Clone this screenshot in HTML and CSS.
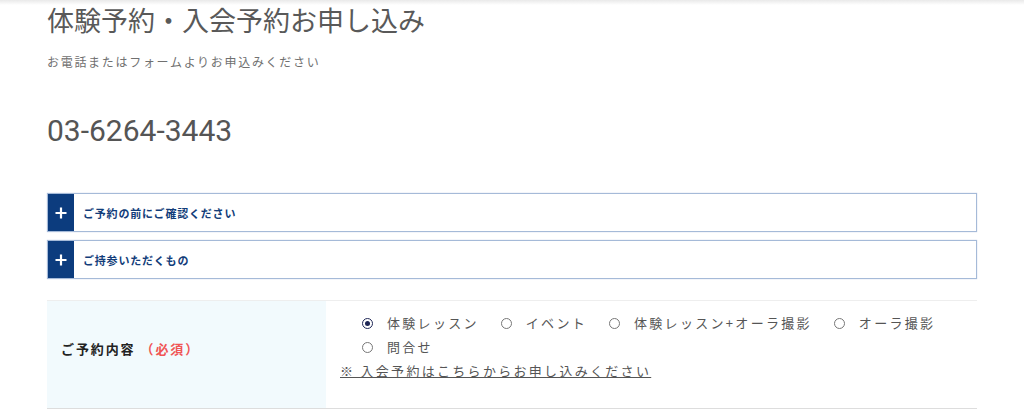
FILE: index.html
```html
<!DOCTYPE html>
<html lang="ja">
<head>
<meta charset="utf-8">
<link rel="stylesheet" href="styles.css">
</head>
<body>
<div class="page">
  <h1 class="title">体験予約・入会予約お申し込み</h1>
  <p class="lead">お電話またはフォームよりお申込みください</p>
  <p class="phone">03-6264-3443</p>

  <div class="acc">
    <span class="acc-icon"><svg width="12" height="12" viewBox="0 0 12 12"><path d="M6 0.5V11.5M0.5 6H11.5" stroke="#fff" stroke-width="2.2"/></svg></span>
    <span class="acc-text">ご予約の前にご確認ください</span>
  </div>
  <div class="acc">
    <span class="acc-icon"><svg width="12" height="12" viewBox="0 0 12 12"><path d="M6 0.5V11.5M0.5 6H11.5" stroke="#fff" stroke-width="2.2"/></svg></span>
    <span class="acc-text">ご持参いただくもの</span>
  </div>

  <div class="form-row">
    <div class="th"><span class="label">ご予約内容</span><span class="req">（必須）</span></div>
    <div class="td">
      <ul class="options">
        <li class="opt"><span class="radio checked"></span>体験レッスン</li>
        <li class="opt"><span class="radio"></span>イベント</li>
        <li class="opt"><span class="radio"></span>体験レッスン+オーラ撮影</li>
        <li class="opt"><span class="radio"></span>オーラ撮影</li>
        <li class="opt"><span class="radio"></span>問合せ</li>
      </ul>
      <a class="note" href="#">※ 入会予約はこちらからお申し込みください</a>
    </div>
  </div>
</div>
</body>
</html>
```

FILE: styles.css
```css
html, body {
  margin: 0;
  padding: 0;
}
body {
  background: linear-gradient(#e9e9e9, #ffffff 5px) no-repeat #fff;
  font-family: "Noto Sans CJK JP", "Noto Sans", sans-serif;
  color: #555;
}
.page {
  margin-left: 47px;
  width: 930px;
}
.title {
  margin: 0;
  font-size: 27px;
  line-height: 40px;
  font-weight: 400;
  color: #595959;
}
.lead {
  margin: 12px 0 0;
  font-size: 12px;
  line-height: 20px;
  letter-spacing: 1.7px;
  color: #707070;
}
.phone {
  margin: 41px 0 0;
  font-family: Roboto, "Noto Sans", sans-serif;
  font-size: 30px;
  line-height: 36px;
  color: #555;
}
.acc {
  display: flex;
  align-items: stretch;
  height: 37px;
  border: 1px solid #a5bad8;
  box-shadow: 0 0 1px rgba(120,150,200,0.5);
  margin-top: 8px;
}
.acc:first-of-type { margin-top: 44px; }
.acc-icon {
  width: 26px;
  background: #0c3c7e;
  display: flex;
  align-items: center;
  justify-content: center;
}
.acc-icon svg { display: block; }
.acc-text {
  display: flex;
  align-items: center;
  margin-left: 9px;
  font-size: 11px;
  font-weight: 700;
  letter-spacing: 0.8px;
  color: #123d7a;
}
.form-row {
  margin-top: 21px;
  display: flex;
  border-top: 1px solid #eeeeee;
  border-bottom: 1px solid #dddddd;
  min-height: 107px;
}
.th {
  width: 265px;
  padding: 0 0 12px 14px;
  background: #f2fafd;
  display: flex;
  align-items: center;
  font-size: 13px;
  font-weight: 700;
  letter-spacing: 1.9px;
}
.label { color: #222; }
.req { color: #f05555; margin-left: 5px; }
.td {
  flex: 1;
  padding: 10px 14px 25px;
  font-size: 13px;
  line-height: 24px;
  letter-spacing: 2.3px;
  color: #555;
}
.options {
  list-style: none;
  margin: 0;
  padding: 0 0 0 22px;
  display: flex;
  flex-wrap: wrap;
  column-gap: 22px;
}
.opt {
  display: flex;
  align-items: center;
}
.radio {
  box-sizing: border-box;
  width: 11px;
  height: 11px;
  border: 1px solid #777;
  border-radius: 50%;
  margin-right: 14px;
  display: inline-flex;
  align-items: center;
  justify-content: center;
}
.radio.checked { border-color: #1f2756; }
.radio.checked::after {
  content: "";
  width: 5px;
  height: 5px;
  border-radius: 50%;
  background: #1f2756;
}
.note {
  display: inline-block;
  color: #555;
  text-decoration: underline;
}
```
